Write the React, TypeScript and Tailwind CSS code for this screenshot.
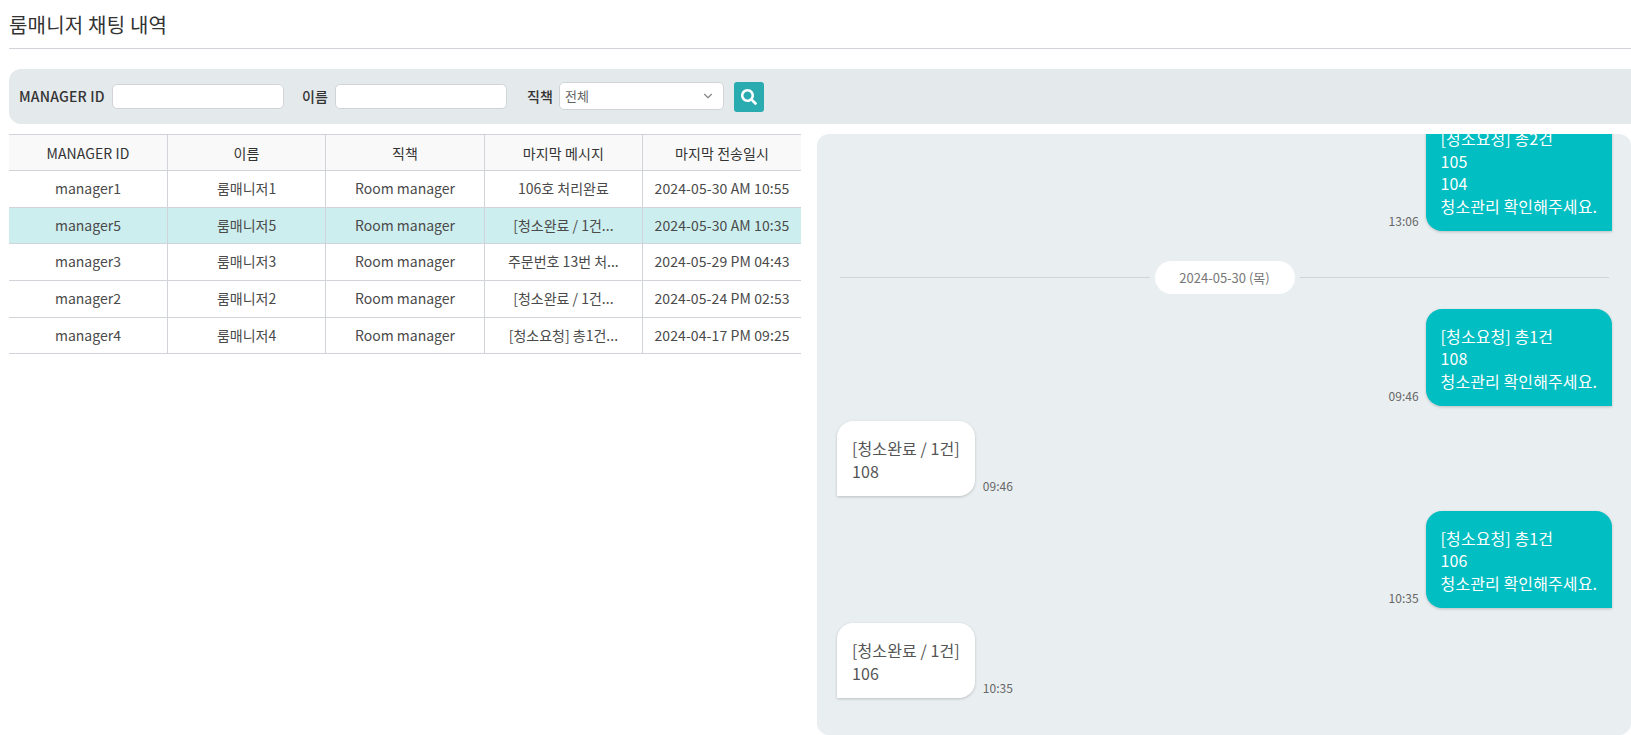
import { ChevronDown } from 'lucide-react';
import { FaSearch } from 'react-icons/fa';

const rows = [
  { id: 'manager1', name: '룸매니저1', msg: '106호 처리완료', at: '2024-05-30 AM 10:55' },
  { id: 'manager5', name: '룸매니저5', msg: '[청소완료 / 1건...', at: '2024-05-30 AM 10:35', active: true },
  { id: 'manager3', name: '룸매니저3', msg: '주문번호 13번 처...', at: '2024-05-29 PM 04:43' },
  { id: 'manager2', name: '룸매니저2', msg: '[청소완료 / 1건...', at: '2024-05-24 PM 02:53' },
  { id: 'manager4', name: '룸매니저4', msg: '[청소요청] 총1건...', at: '2024-04-17 PM 09:25' },
];

const heads = ['MANAGER ID', '이름', '직책', '마지막 메시지', '마지막 전송일시'];

function Sent({ lines, time }: { lines: string[]; time: string }) {
  return (
    <div className="flex items-end justify-end gap-[7px] shrink-0">
      <span className="text-xs leading-4 text-[#666] pb-[2px]">{time}</span>
      <div className="bg-[#00bec1] text-white text-base tracking-[0.1px] leading-[22.4px] px-[15px] pt-4 pb-[14px] rounded-t-[16px] rounded-bl-[16px] shadow-[0_1px_3px_rgba(0,0,0,0.2)]">
        {lines.map((l) => (
          <div key={l}>{l}</div>
        ))}
      </div>
    </div>
  );
}

function Received({ lines, time }: { lines: string[]; time: string }) {
  return (
    <div className="flex items-end gap-2 shrink-0">
      <div className="bg-white text-[#555] text-base tracking-[0.1px] leading-[22.4px] px-[15px] pt-4 pb-[14px] rounded-t-[16px] rounded-br-[16px] shadow-[0_1px_3px_rgba(0,0,0,0.2)]">
        {lines.map((l) => (
          <div key={l}>{l}</div>
        ))}
      </div>
      <span className="text-xs leading-4 text-[#666] pb-[2px]">{time}</span>
    </div>
  );
}

export default function App() {
  return (
    <div className="h-[735px] overflow-hidden bg-white pl-[9px] text-[#333] font-['Noto_Sans_CJK_KR','Noto_Sans',sans-serif]">
      <h1 className="h-[49px] border-b border-[#d0d4d8] text-xl tracking-[0.2px] leading-[50px] font-normal text-[#333]">룸매니저 채팅 내역</h1>

      <div className="mt-5 h-[55px] flex items-center pl-[10px] rounded-l-[12px] bg-[#e4e9ec] text-sm font-medium">
        <label className="w-[93px] pb-[2px] tracking-[0.2px] whitespace-nowrap">MANAGER ID</label>
        <input className="w-[172px] h-[25px] mb-px rounded-[5px] bg-white border border-[#d0d4d8]" />
        <label className="ml-[18px] w-[33px] pb-[2px]">이름</label>
        <input className="w-[172px] h-[25px] mb-px rounded-[5px] bg-white border border-[#d0d4d8]" />
        <label className="ml-5 w-[32px] pb-[2px]">직책</label>
        <div className="relative w-[165px] h-[28px] mb-px">
          <select className="w-full h-full appearance-none rounded-[5px] bg-white border border-[#d0d4d8] pl-[5px] text-[13px] font-normal text-[#666]">
            <option>전체</option>
          </select>
          <ChevronDown className="absolute right-[9px] top-[7px] w-[14px] h-[14px] text-[#888]" />
        </div>
        <button className="ml-[10px] w-[30px] h-[30px] rounded-[3px] bg-[#2aabb0] flex items-center justify-center text-white">
          <FaSearch className="w-4 h-4" />
        </button>
      </div>

      <div className="mt-[10px] flex h-[601px]">
        <table className="w-[792px] h-fit table-fixed border-collapse text-sm">
          <thead>
            <tr className="h-[36px] bg-[#f9f9f9] border-y border-[#d0d4d8]">
              {heads.map((h, i) => (
                <th key={h} className={`font-normal text-[14px] tracking-[0.1px] text-[#333] ${i > 0 ? 'border-l border-[#d0d4d8]' : ''}`}>
                  {h}
                </th>
              ))}
            </tr>
          </thead>
          <tbody>
            {rows.map((r) => (
              <tr key={r.id} className={`h-[36.7px] border-b border-[#d0d4d8] text-center text-[#4a4a4a] ${r.active ? 'bg-[#cdeeee]' : ''}`}>
                <td className="pb-[2px]">{r.id}</td>
                <td className="pb-[2px] border-l border-[#d0d4d8]">{r.name}</td>
                <td className="pb-[2px] border-l border-[#d0d4d8]">Room manager</td>
                <td className="pb-[2px] border-l border-[#d0d4d8] whitespace-nowrap">{r.msg}</td>
                <td className="pb-[2px] border-l border-[#d0d4d8] tracking-[0.1px] whitespace-nowrap">{r.at}</td>
              </tr>
            ))}
          </tbody>
        </table>

        <div className="ml-4 flex-1 flex flex-col justify-end gap-[15px] overflow-hidden rounded-[12px] bg-[#e9eef1] pl-5 pr-[19px] pb-[37px]">
          <Sent lines={['[청소요청] 총2건', '105', '104', '청소관리 확인해주세요.']} time="13:06" />
          <div className="flex items-center gap-[5px] mt-[15px] shrink-0 pl-[3px] pr-[3px]">
            <div className="flex-1 h-px bg-[#d0d4d8]" />
            <span className="h-[33px] w-[140px] rounded-full bg-white text-center text-[13px] leading-[33px] text-[#777]">2024-05-30 (목)</span>
            <div className="flex-1 h-px bg-[#d0d4d8]" />
          </div>
          <Sent lines={['[청소요청] 총1건', '108', '청소관리 확인해주세요.']} time="09:46" />
          <Received lines={['[청소완료 / 1건]', '108']} time="09:46" />
          <Sent lines={['[청소요청] 총1건', '106', '청소관리 확인해주세요.']} time="10:35" />
          <Received lines={['[청소완료 / 1건]', '106']} time="10:35" />
        </div>
      </div>
    </div>
  );
}
